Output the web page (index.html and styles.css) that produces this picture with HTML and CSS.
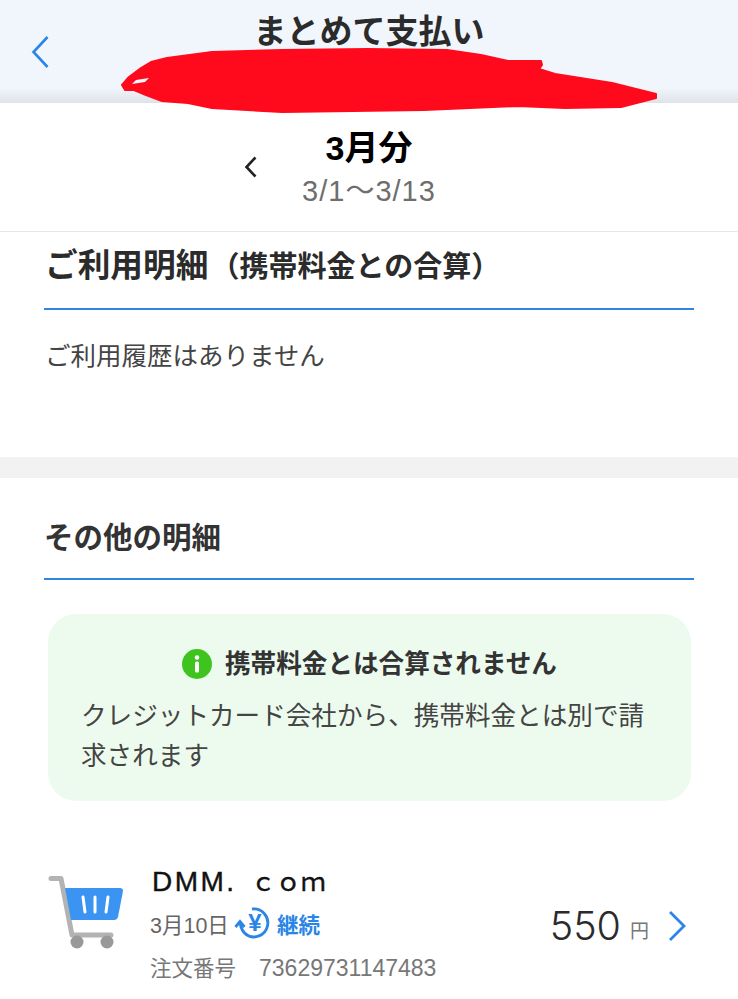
FILE: index.html
```html
<!DOCTYPE html>
<html lang="ja">
<head>
  <meta charset="UTF-8" />
  <meta name="viewport" content="width=device-width, initial-scale=1.0" />
  <title>まとめて支払い</title>
  <link rel="stylesheet" href="styles.css">
</head>
<body>
  <header class="topbar">
    <svg class="back" width="20" height="34" viewBox="0 0 20 34"><path d="M17.5 2 L3.5 17 L17.5 32" /></svg>
    <h1>まとめて支払い</h1>
    <svg class="scribble" width="540" height="66" viewBox="0 0 540 66">
      <path d="M1 39 L8 31 L20 22 L30 16 L46 12 L91 6 L161 4 L246 3 L326 4 L360 9 L387 15 L420 15 L421 19 L418 23 L434 28 L491 37 L535 48 L535 52 L500 61 L444 62 L397 60 L303 64 L161 66 L91 62 L67 57 L41 55 L25 49 L13 44 L4 44 Z" />
      <path class="scribble-gap" d="M11 38 L15 34 L28 32 L24 36 Z" />
    </svg>
  </header>

  <section class="month">
    <svg class="month-prev" width="14" height="22" viewBox="0 0 14 22"><path d="M11.5 1.5 L2.5 11 L11.5 20.5" /></svg>
    <div class="month-title">3月分</div>
    <div class="month-range">3/1〜3/13</div>
  </section>

  <section class="usage">
    <h2 class="usage-title">ご利用明細<span class="usage-sub">（携帯料金との合算）</span></h2>
    <p class="empty">ご利用履歴はありません</p>
  </section>

  <div class="divider"></div>

  <section class="other">
    <h2 class="other-title">その他の明細</h2>

    <div class="notice">
      <div class="notice-head">
        <svg width="30" height="30" viewBox="0 0 30 30"><circle cx="15" cy="15" r="15" fill="#3fc41f" /><circle cx="15" cy="8.5" r="2.3" fill="#fff" /><rect x="13" y="12.5" width="4" height="11" rx="1.5" fill="#fff" /></svg>
        <span>携帯料金とは合算されません</span>
      </div>
      <p>クレジットカード会社から、携帯料金とは別で請求されます</p>
    </div>

    <div class="item">
      <svg class="cart" width="76" height="74" viewBox="0 0 76 74">
        <path d="M3 2.5 H13 L24 59 H63" fill="none" stroke="#b3b3b3" stroke-width="5" stroke-linecap="round" stroke-linejoin="round" />
        <path d="M17 12 H72 Q75 12 75 15 L70 41 Q69 44 66 44 H23 Z" fill="#3b93f2" />
        <path d="M35 21 L37 36 M47 21 V36 M60 21 L58 36" stroke="#fff" stroke-width="3" stroke-linecap="round" fill="none" />
        <circle cx="29" cy="66" r="6.5" fill="#999" />
        <circle cx="59" cy="66" r="6.5" fill="#999" />
      </svg>
      <div class="item-body">
        <div class="item-name"><span class="brand">DMM.</span><span class="brand-tld">ｃｏｍ</span></div>
        <div class="item-date">
          <span>3月10日</span>
          <svg width="38" height="32" viewBox="0 0 38 32">
            <path d="M18 2 A14 14 0 1 1 12 27.5" fill="none" stroke="#2a85e6" stroke-width="2.8" />
            <path d="M1.5 20 L6 14.5 L10.5 20 M6 15 C6.5 20 8.5 25 13 28" fill="none" stroke="#2a85e6" stroke-width="2.8" />
            <text x="21" y="24" text-anchor="middle" class="yen">¥</text>
          </svg>
          <span class="renew">継続</span>
        </div>
        <div class="item-order"><span>注文番号</span><span class="order-no">73629731147483</span></div>
      </div>
      <div class="item-price">
        <span class="amount">550</span>
        <span class="unit">円</span>
        <svg class="item-next" width="20" height="32" viewBox="0 0 20 32"><path d="M3 2 L17 16 L3 30" /></svg>
      </div>
    </div>
  </section>
</body>
</html>
```
FILE: styles.css
```css
html, body {
  height: 999px;
  overflow: hidden;
}
body {
  margin: 0;
  background-color: #fff;
  color: #333;
  font-family: "Liberation Sans", "Noto Sans CJK JP", sans-serif;
}
h1, h2, p {
  margin: 0;
}

.topbar {
  position: relative;
  height: 103px;
  background: linear-gradient(#f1f6fc 0, #f1f6fc 88px, #dfe3e9 103px);
}
.topbar h1 {
  padding-top: 9px;
  text-align: center;
  font-size: 33px;
  line-height: 46px;
  font-weight: 700;
  color: #2b2b2b;
}
.back {
  position: absolute;
  left: 30px;
  top: 35px;
}
.back path {
  fill: none;
  stroke: #2a85e6;
  stroke-width: 2.6;
}
.scribble {
  position: absolute;
  left: 121px;
  top: 46px;
  overflow: visible;
}
.scribble path {
  fill: #ff0a1c;
  stroke: #ff0a1c;
  stroke-width: 2;
  stroke-linejoin: round;
}
.scribble .scribble-gap {
  fill: #f1f6fc;
  stroke: none;
}

.month {
  position: relative;
  height: 128px;
  border-bottom: 1px solid #e6e6e6;
  text-align: center;
}
.month-prev {
  position: absolute;
  left: 244px;
  top: 53px;
}
.month-prev path {
  fill: none;
  stroke: #222;
  stroke-width: 2.6;
}
.month-title {
  padding-top: 23px;
  font-size: 34px;
  line-height: 44px;
  font-weight: 700;
  color: #000;
}
.month-range {
  font-size: 29px;
  line-height: 43px;
  letter-spacing: 1px;
  color: #6e6e6e;
}

.usage {
  height: 225px;
  padding: 0 44px;
}
.usage-title {
  height: 76px;
  border-bottom: 2px solid #2f86e0;
  padding-left: 1px;
  font-size: 32.7px;
  line-height: 68px;
  font-weight: 700;
  color: #2b2b2b;
}
.usage-sub {
  margin-left: 2px;
  font-size: 29px;
}
.empty {
  padding: 27px 0 0 1px;
  font-size: 25.5px;
  line-height: 38px;
  color: #444;
}

.divider {
  height: 21px;
  background-color: #f2f2f2;
}

.other {
  padding: 0 44px;
}
.other-title {
  height: 100px;
  border-bottom: 2px solid #2f86e0;
  font-size: 29.5px;
  line-height: 119px;
  font-weight: 700;
  color: #333;
}

.notice {
  margin: 34px 3px 0 4px;
  height: 187px;
  padding: 0 33px;
  box-sizing: border-box;
  border-radius: 28px;
  background-color: #edfbee;
}
.notice-head {
  display: flex;
  justify-content: center;
  align-items: center;
  gap: 13px;
  padding-top: 32px;
  font-size: 25.6px;
  line-height: 36px;
  font-weight: 700;
  color: #333;
}
.notice p {
  margin-top: 14px;
  font-size: 25.6px;
  line-height: 40px;
  color: #444;
}

.item {
  display: flex;
  margin: 60px 0 0 4px;
}
.cart {
  flex: none;
  margin-top: 15px;
}
.item-body {
  flex: 1;
  padding-left: 26px;
}
.item-name {
  box-sizing: border-box;
  height: 40px;
  padding: 1px 0 0 2px;
  font-size: 28px;
  line-height: 39px;
  color: #111;
  -webkit-text-stroke: 0.4px #111;
}
.brand {
  padding-right: 14px;
  letter-spacing: 2.5px;
}
.brand-tld {
  font-size: 25px;
}
.item-date {
  display: flex;
  align-items: center;
  height: 44px;
  font-size: 21.5px;
  color: #666;
}
.item-date svg {
  margin-left: 5px;
}
.yen {
  font-size: 24px;
  font-weight: 700;
  fill: #2a85e6;
}
.renew {
  margin-left: 5px;
  color: #2a85e6;
  font-weight: 700;
}
.item-order {
  display: flex;
  align-items: baseline;
  gap: 23px;
  margin-top: 4px;
  font-size: 21.5px;
  line-height: 38px;
  color: #777;
}
.order-no {
  font-size: 23px;
}
.item-price {
  display: flex;
  align-items: center;
  height: 130px;
}
.amount {
  font-family: Inter, "Liberation Sans", sans-serif;
  font-size: 39.5px;
  font-weight: 300;
  color: #2b2b2b;
}
.unit {
  margin: 6px 0 0 9px;
  font-size: 19px;
  color: #777;
}
.item-next {
  margin-left: 18px;
  margin-right: 7px;
}
.item-next path {
  fill: none;
  stroke: #2a85e6;
  stroke-width: 2.8;
}
```
